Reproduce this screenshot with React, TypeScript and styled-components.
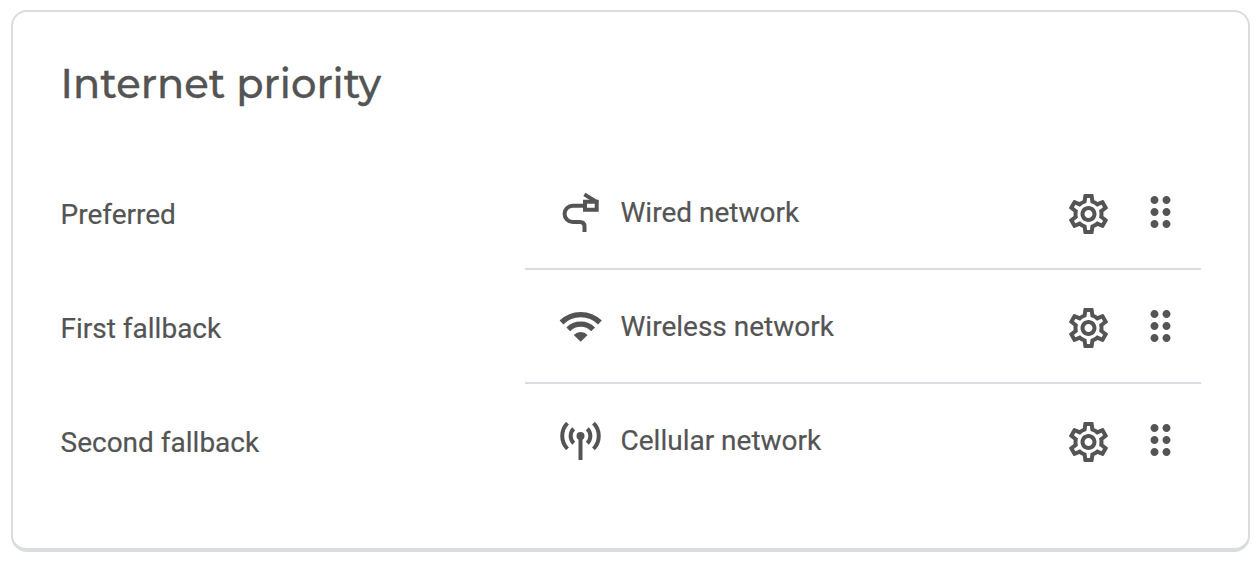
import styled, { createGlobalStyle } from "styled-components";
import { MdDragIndicator, MdOutlineSettings } from "react-icons/md";

const WiredIcon = () => (
  <svg width="48" height="48" viewBox="0.5 0 48 48" fill="none" stroke="currentColor" strokeWidth="4">
    <path d="M27 17.7H16.2a8.1 8.1 0 0 0 0 16.3H23.5q4.5 0 4.5 4.5V44" />
    <path d="M28.5 13.8h11.7v8H28.5z" />
    <path d="M27.9 6.4L41.2 14.6" />
  </svg>
)

const WirelessIcon = () => (
  <svg width="48" height="48" viewBox="0.5 0 48 48" fill="none" stroke="currentColor" strokeWidth="5.4">
    <path d="M5 20.5a27.4 27.4 0 0 1 38.4 0" />
    <path d="M11.8 27.3a17.5 17.5 0 0 1 24.8 0" />
    <path d="M24.2 39.8l-6.9-6.9a9.8 9.8 0 0 1 13.8 0z" fill="currentColor" stroke="none" />
  </svg>
)

const CellularIcon = () => (
  <svg width="48" height="48" viewBox="0.5 0 48 48" fill="none" stroke="currentColor" strokeWidth="4">
    <path d="M24 20v24" />
    <circle cx="24" cy="20" r="4" fill="currentColor" stroke="none" />
    <path d="M17.2 12.8a10 10 0 0 0 0 14.4M30.8 12.8a10 10 0 0 1 0 14.4" />
    <path d="M11 7.2a18.2 18.2 0 0 0 0 25.6M37 7.2a18.2 18.2 0 0 1 0 25.6" />
  </svg>
)

const networks = [
  { priority: "Preferred", name: "Wired network", icon: <WiredIcon /> },
  { priority: "First fallback", name: "Wireless network", icon: <WirelessIcon /> },
  { priority: "Second fallback", name: "Cellular network", icon: <CellularIcon /> },
];

const App = () => {
  return (
    <>
      <GlobalStyle />
      <Card>
        <Title>Internet priority</Title>
        <Content>
          <PriorityList>
            {networks.map(({ priority }) => (
              <Priority key={priority}>{priority}</Priority>
            ))}
          </PriorityList>
          <NetworkList>
            {networks.map(({ name, icon }) => (
              <NetworkItem key={name}>
                <NetworkIcon>{icon}</NetworkIcon>
                <NetworkName>{name}</NetworkName>
                <SettingsButton aria-label="Settings">
                  <MdOutlineSettings size={48} viewBox="0.25 0 24 24" />
                </SettingsButton>
                <DragHandle>
                  <MdDragIndicator size={48} viewBox="0.25 0 24 24" />
                </DragHandle>
              </NetworkItem>
            ))}
          </NetworkList>
        </Content>
      </Card>
    </>
  )
}

export default App

const GlobalStyle = createGlobalStyle`
  * {
    box-sizing: border-box;
  }

  body {
    margin: 0;
    background: #fff;
    color: #545454;
    font-family: Roboto, sans-serif;
    -webkit-text-stroke: 0.2px #545454;
  }
`

const Card = styled.section`
  width: 1239.5px;
  height: 542px;
  margin: 10px 0 0 10.5px;
  padding: 48px 48px 0;
  border: 2px solid #dadce0;
  border-bottom-width: 4px;
  border-radius: 16px;
  background: #fff;
`

const Title = styled.h2`
  margin: 0;
  height: 48px;
  font-family: Montserrat, Inter, sans-serif;
  font-size: 40px;
  font-weight: 500;
  line-height: 48px;
  letter-spacing: 0.06px;
  white-space: nowrap;
  -webkit-text-stroke: 0.3px #545454;
`

const Content = styled.div`
  display: flex;
  margin-top: 48px;
`

const PriorityList = styled.div`
  flex: none;
  width: 464px;
`

const Priority = styled.div`
  display: flex;
  align-items: center;
  height: 114px;
  padding-top: 2px;
  font-size: 28px;
`

const NetworkList = styled.ul`
  flex: none;
  width: 676px;
  margin: 0;
  padding: 0;
  list-style: none;
`

const NetworkItem = styled.li`
  display: flex;
  align-items: center;
  height: 114px;
  padding: 0 16px 0 32px;
  border-bottom: 2px solid #dadae0;

  &:last-child {
    border-bottom-color: transparent;
  }
`

const NetworkIcon = styled.span`
  display: flex;
  align-items: center;
  justify-content: center;
  width: 48px;
  height: 48px;
`

const NetworkName = styled.span`
  flex: 1;
  margin-left: 16px;
  font-size: 28px;
`

const SettingsButton = styled.button`
  display: flex;
  margin: 3px 24px 0 0;
  padding: 0;
  border: 0;
  background: none;
  color: inherit;
  cursor: pointer;
`

const DragHandle = styled.span`
  display: flex;
  cursor: grab;
`
